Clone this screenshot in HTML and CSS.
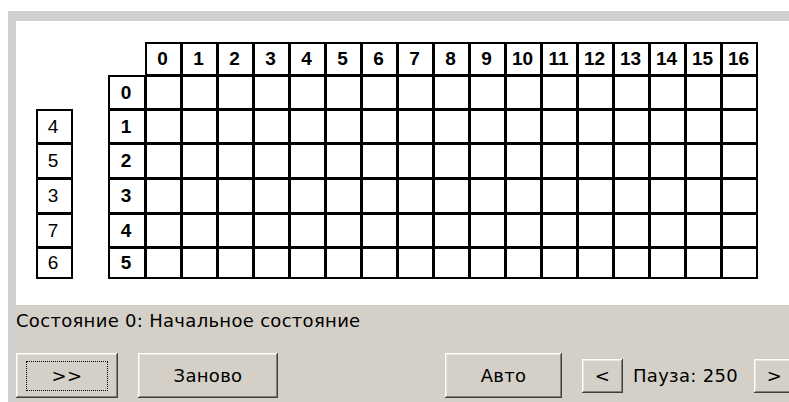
FILE: index.html
```html
<!DOCTYPE html>
<html lang="ru">
<head>
<meta charset="utf-8">
<title>Машина</title>
<link rel="stylesheet" href="styles.css">
</head>
<body>
<div class="frame">
  <div class="applet">
    <div class="board">
      <div class="grid">
        <!-- header row -->
        <div class="gap"></div><div class="gap"></div><div class="gap"></div>
        <div class="c h">0</div><div class="c h">1</div><div class="c h">2</div><div class="c h">3</div><div class="c h">4</div><div class="c h">5</div><div class="c h">6</div><div class="c h">7</div><div class="c h">8</div><div class="c h">9</div><div class="c h">10</div><div class="c h">11</div><div class="c h">12</div><div class="c h">13</div><div class="c h">14</div><div class="c h">15</div><div class="c h">16</div>
        <!-- row 0 -->
        <div class="gap"></div><div class="gap"></div><div class="c h">0</div>
        <div class="c"></div><div class="c"></div><div class="c"></div><div class="c"></div><div class="c"></div><div class="c"></div><div class="c"></div><div class="c"></div><div class="c"></div><div class="c"></div><div class="c"></div><div class="c"></div><div class="c"></div><div class="c"></div><div class="c"></div><div class="c"></div><div class="c"></div>
        <!-- row 1 -->
        <div class="c v">4</div><div class="gap"></div><div class="c h">1</div>
        <div class="c"></div><div class="c"></div><div class="c"></div><div class="c"></div><div class="c"></div><div class="c"></div><div class="c"></div><div class="c"></div><div class="c"></div><div class="c"></div><div class="c"></div><div class="c"></div><div class="c"></div><div class="c"></div><div class="c"></div><div class="c"></div><div class="c"></div>
        <!-- row 2 -->
        <div class="c v">5</div><div class="gap"></div><div class="c h">2</div>
        <div class="c"></div><div class="c"></div><div class="c"></div><div class="c"></div><div class="c"></div><div class="c"></div><div class="c"></div><div class="c"></div><div class="c"></div><div class="c"></div><div class="c"></div><div class="c"></div><div class="c"></div><div class="c"></div><div class="c"></div><div class="c"></div><div class="c"></div>
        <!-- row 3 -->
        <div class="c v">3</div><div class="gap"></div><div class="c h">3</div>
        <div class="c"></div><div class="c"></div><div class="c"></div><div class="c"></div><div class="c"></div><div class="c"></div><div class="c"></div><div class="c"></div><div class="c"></div><div class="c"></div><div class="c"></div><div class="c"></div><div class="c"></div><div class="c"></div><div class="c"></div><div class="c"></div><div class="c"></div>
        <!-- row 4 -->
        <div class="c v">7</div><div class="gap"></div><div class="c h">4</div>
        <div class="c"></div><div class="c"></div><div class="c"></div><div class="c"></div><div class="c"></div><div class="c"></div><div class="c"></div><div class="c"></div><div class="c"></div><div class="c"></div><div class="c"></div><div class="c"></div><div class="c"></div><div class="c"></div><div class="c"></div><div class="c"></div><div class="c"></div>
        <!-- row 5 -->
        <div class="c v">6</div><div class="gap"></div><div class="c h">5</div>
        <div class="c"></div><div class="c"></div><div class="c"></div><div class="c"></div><div class="c"></div><div class="c"></div><div class="c"></div><div class="c"></div><div class="c"></div><div class="c"></div><div class="c"></div><div class="c"></div><div class="c"></div><div class="c"></div><div class="c"></div><div class="c"></div><div class="c"></div>
      </div>
    </div>
    <div class="status">Состояние 0: Начальное состояние</div>
    <div class="controls">
      <button class="btn step"><span class="focus">&gt;&gt;</span></button>
      <button class="btn reset">Заново</button>
      <button class="btn auto">Авто</button>
      <button class="btn small">&lt;</button>
      <span class="pause">Пауза: 250</span>
      <button class="btn small">&gt;</button>
    </div>
  </div>
</div>
</body>
</html>
```

FILE: styles.css
```css
html, body {
  margin: 0;
  height: 100%;
  overflow: hidden;
  background: #fff;
}

body {
  font-family: "DejaVu Sans", "Liberation Sans", sans-serif;
  color: #000;
}

.frame {
  margin: 11px 0 0 8px;
  padding: 10px 0 0 8px;
  height: 391px;
  box-sizing: border-box;
  background: #cfcfcf;
}

.applet {
  height: 100%;
  background: #d4d0c8;
  overflow: hidden;
}

/* white drawing area with the transition table */
.board {
  height: 284px;
  box-sizing: border-box;
  padding: 21px 0 0 20px;
  background: #fff;
}

.grid {
  display: grid;
  grid-template-columns: 36px 36px 37px repeat(17, 36px);
  grid-template-rows: 33px 34px 34px 35px 35px 34px 31px;
}

.c {
  margin: 0 -1px -1px 0;
  border: 2px solid #000;
  background: #fff;
  display: flex;
  align-items: center;
  justify-content: center;
  font-family: "Liberation Sans", Arial, sans-serif;
  font-size: 19px;
}

.h {
  font-weight: bold;
  padding-right: 2px;
}

.v {
  padding-right: 3px;
}

.status {
  height: 48px;
  box-sizing: border-box;
  padding-top: 6px;
  font-size: 18px;
  letter-spacing: 0.3px;
  line-height: 20px;
  white-space: nowrap;
}

.controls {
  display: flex;
  align-items: center;
  height: 45px;
  white-space: nowrap;
}

.btn {
  margin: 0;
  padding: 0;
  border: none;
  background: #d4d0c8;
  font-family: inherit;
  font-size: 18px;
  letter-spacing: 0.3px;
  color: #000;
  box-sizing: border-box;
  display: flex;
  align-items: center;
  justify-content: center;
  flex: none;
  box-shadow:
    inset -1px -1px #404040,
    inset 1px 1px #ffffff,
    inset -2px -2px #808080,
    inset 2px 2px #e8e6e0;
}

.step {
  width: 102px;
  height: 45px;
}

.focus {
  width: 82px;
  height: 30px;
  border: 1px dotted #000;
  box-sizing: border-box;
  display: flex;
  align-items: center;
  justify-content: center;
}

.reset {
  width: 140px;
  height: 45px;
  margin-left: 20px;
}

.auto {
  width: 117px;
  height: 45px;
  margin-left: 167px;
}

.small {
  width: 41px;
  height: 34px;
}

.auto + .small {
  margin-left: 20px;
}

.pause {
  width: 110px;
  flex: none;
  margin: 0 11px 0 10px;
  font-size: 18px;
  letter-spacing: 0.3px;
}
```
